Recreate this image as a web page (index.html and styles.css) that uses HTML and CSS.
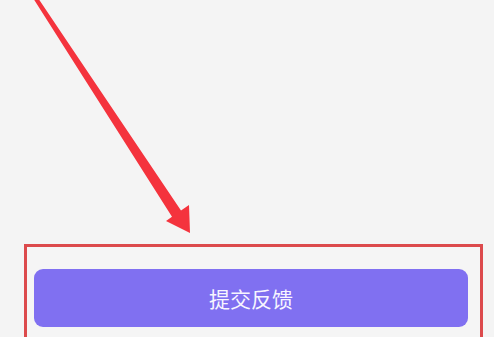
FILE: index.html
```html
<!DOCTYPE html>
<html lang="zh-CN">
<head>
<meta charset="utf-8">
<title>提交反馈</title>
<link rel="stylesheet" href="styles.css">
</head>
<body>
<main class="page">
  <div class="spacer"></div>
  <div class="highlight">
    <button class="submit-btn" type="button">提交反馈</button>
  </div>
</main>
<svg class="arrow" width="494" height="337" viewBox="0 0 494 337" aria-hidden="true">
  <polygon points="33,-2 38,-2 181,210.6 189,205 190,233 166,221 172,216.8" fill="#f4333d"/>
</svg>
</body>
</html>
```

FILE: styles.css
```css
html, body {
  margin: 0;
  padding: 0;
  background: #f4f4f4;
  height: 100%;
  overflow: hidden;
}

.page {
  display: flex;
  flex-direction: column;
  height: 337px;
  font-family: "Noto Sans CJK SC", "Noto Sans", sans-serif;
}

.spacer {
  height: 244px;
  flex: none;
}

.highlight {
  box-sizing: border-box;
  margin-left: 24px;
  width: 459px;
  flex: 1;
  border: 3px solid #dc4a4c;
  border-bottom: none;
  padding: 22px 12px 0 7px;
  background: #f5f5f5;
}

.submit-btn {
  display: flex;
  align-items: center;
  justify-content: center;
  width: 434px;
  height: 58px;
  border: none;
  border-radius: 9px;
  background: #8070f1;
  color: #f7f5ff;
  font-family: "Noto Sans CJK SC", "Noto Sans", sans-serif;
  font-size: 21px;
  padding: 0;
}

.arrow {
  position: absolute;
  left: 0;
  top: 0;
  pointer-events: none;
}
```
